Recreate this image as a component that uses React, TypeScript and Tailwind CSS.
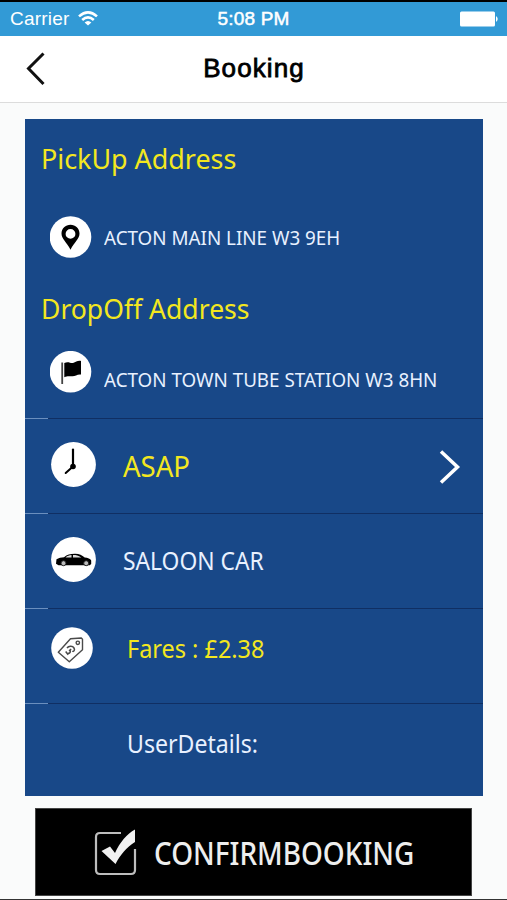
import React from 'react';

function StatusBar() {
  return (
    <div className="grid h-[36px] grid-cols-3 items-center border-t-2 border-black bg-[#329ad6] text-[19px] leading-none text-white">
      <div className="flex items-center gap-[9px] pb-[2px] pl-[10px]">
        <span className="tracking-[0.2px]">Carrier</span>
        <svg width="20" height="15" viewBox="0 0 20 15" fill="none" stroke="white" strokeWidth="2.6">
          <path d="M1 5.4 Q10 -2.6 19 5.4" />
          <path d="M4.2 8.9 Q10 3.8 15.8 8.9" />
          <path d="M10 14.6 L6.6 11.4 Q10 8.4 13.4 11.4 Z" fill="white" stroke="none" />
        </svg>
      </div>
      <span className="pb-[2px] text-center tracking-[0.2px] [-webkit-text-stroke:0.5px_white]">5:08 PM</span>
      <div className="flex justify-end pb-[1px] pr-[8px]">
        <svg width="40" height="16" viewBox="0 0 40 16" fill="white">
          <rect x="1" y="0.5" width="35" height="15" rx="1.5" />
          <path d="M37 5 Q40.5 8 37 11 Z" />
        </svg>
      </div>
    </div>
  );
}

function Header() {
  return (
    <div className="flex h-[67px] items-center justify-between border-b border-[#dcdcdc] bg-white">
      <button className="w-[100px] pl-[25px]">
        <svg width="20" height="34" viewBox="0 0 20 34" fill="none" stroke="#111" strokeWidth="3">
          <path d="M18.5 1.5 L3.5 16.5 L18.5 32" />
        </svg>
      </button>
      <h1 className="pb-[2px] pl-px text-[26px] leading-none tracking-[1.1px] text-black [-webkit-text-stroke:0.8px_black]">Booking</h1>
      <div className="w-[100px]" />
    </div>
  );
}

function PinIcon() {
  return (
    <svg className="shrink-0" width="42" height="42" viewBox="0 0 42 42">
      <circle cx="20.5" cy="21" r="20.8" fill="white" />
      <path fillRule="evenodd" d="M20.500 8.800c-5 0-9 3.900-9 8.800 0 5.600 5.200 8.600 9 16.200 3.800-7.600 9-10.600 9-16.200 0-4.900-4-8.800-9-8.800zm0 4.200a4.900 4.900 0 1 1 0 9.800 4.900 4.900 0 0 1 0-9.800z" />
    </svg>
  );
}

function FlagIcon() {
  return (
    <svg className="shrink-0" width="42" height="42" viewBox="0 0 42 42">
      <circle cx="20.5" cy="20.7" r="20.8" fill="white" />
      <path d="M12.2 11.500v21.500" stroke="#444" strokeWidth="1.8" />
      <path d="M14.300 12c4-2 6 .4 8.700-.1 3-.6 4.500-2.600 8-1.900v13.500c-4-.4-5.500 1.700-8.500 1.800-3 .1-5-.8-8.200 1z" />
    </svg>
  );
}

function ClockIcon() {
  return (
    <svg className="shrink-0" width="46" height="46" viewBox="0 0 46 46">
      <circle cx="22.5" cy="22.5" r="22.4" fill="white" />
      <path d="M22 7.500v17" stroke="black" strokeWidth="2.2" strokeLinecap="round" />
      <path d="M22 24.500l-7.300 6.500" stroke="black" strokeWidth="2" strokeLinecap="round" />
      <circle cx="22" cy="24.500" r="2.8" />
    </svg>
  );
}

function CarIcon() {
  return (
    <svg className="shrink-0" width="46" height="46" viewBox="0 0 46 46">
      <circle cx="22.5" cy="22.5" r="22.4" fill="white" />
      <path d="M5.500 22.200c2-1.400 5-1.600 7.500-2 3-2.400 6-3.400 11-3.400 4.500 0 7 1.400 9.700 3.800 3 .3 5.800 1.200 6.500 3v3.400l-1.500 1.200H7.500L5 26.800z" />
      <path d="M14.500 20.400c2-1.600 3.700-2.300 6-2.400v2.400zM22 18c3.600 0 5.200.4 8.300 2.600L22 20.400z" fill="#ddd" />
      <circle cx="12.5" cy="26.2" r="2.5" fill="#bbb" stroke="#222" />
      <circle cx="35.2" cy="26.2" r="2.5" fill="#bbb" stroke="#222" />
    </svg>
  );
}

function TagIcon() {
  return (
    <svg className="shrink-0" width="42" height="42" viewBox="0 0 42 42" fill="none" stroke="#4a4a4a" strokeWidth="1.4">
      <circle cx="21" cy="21" r="20.8" fill="white" stroke="none" />
      <path d="M7.300 25.200L19.500 11.800l10.800-.8 1.200 1.200v10.600L18.300 34.700z" strokeLinejoin="round" />
      <circle cx="26.800" cy="15.800" r="1.7" />
      {/* pound sign tilted along the tag */}
      <path d="M16 21c1.500-2 5.500-2.500 7 0 1.200 2-.2 4-1.700 3.200M14.700 24.500l2.500 3.400M16.500 26.500c2.500 0 3.500-1.500 2.500-3.500M18 23.800l2.200-1.600" strokeWidth="1.5" />
    </svg>
  );
}

// the separator starts light under the icon inset, then goes dark
function Separator() {
  return (
    <div className="flex h-px">
      <div className="w-[23px] bg-[#6b8fbe]" />
      <div className="flex-1 bg-[#102f63]" />
    </div>
  );
}

function BookingCard() {
  return (
    <div className="ml-[25px] mt-[16px] h-[677px] w-[458px] bg-[#184888] font-['Noto_Sans',sans-serif] whitespace-nowrap text-[#e8f1ff]">
      <div className="h-[299px] pt-[19px]">
        <h2 className="ml-[16px] h-[40px] origin-left scale-x-[0.96] text-[28px] leading-[40px] text-[#f3e71f]">PickUp Address</h2>
        <div className="mt-[38px] flex h-[42px] items-center gap-[12px] pl-[25px]">
          <PinIcon />
          <span className="origin-left scale-x-[0.917] text-[20.5px]">ACTON MAIN LINE W3 9EH</span>
        </div>
        <h2 className="ml-[16px] mt-[30px] h-[40px] origin-left scale-x-[0.948] text-[28px] leading-[40px] text-[#f3e71f]">DropOff Address</h2>
        <div className="mt-[23px] flex h-[42px] items-center gap-[12px] pl-[25px]">
          <FlagIcon />
          <span className="mt-[15px] origin-left scale-x-[0.917] text-[20.5px]">ACTON TOWN TUBE STATION W3 8HN</span>
        </div>
      </div>
      <Separator />
      <div className="flex h-[94px] items-center pb-[2px] pl-[26px] pr-[22px]">
        <ClockIcon />
        <span className="ml-[26px] mt-[2px] origin-left scale-x-[0.95] text-[29px] text-[#f3e71f]">ASAP</span>
        <svg className="ml-auto mt-[3px]" width="22" height="34" viewBox="0 0 22 34" fill="none" stroke="white" strokeWidth="3.5">
          <path d="M2 1.5L18.5 17 2 32.5" />
        </svg>
      </div>
      <Separator />
      <div className="flex h-[94px] items-center pb-[3px] pl-[26px]">
        <CarIcon />
        <span className="ml-[26px] mt-[3px] origin-left scale-x-[0.913] text-[25px]">SALOON CAR</span>
      </div>
      <Separator />
      <div className="flex h-[94px] items-center pb-[16px] pl-[26px]">
        <TagIcon />
        <span className="ml-[34px] mt-px origin-left scale-x-[0.938] text-[25px] text-[#f3e71f]">Fares : £2.38</span>
      </div>
      <Separator />
      <div className="flex h-[92px] items-center pb-[13px] pl-[102px]">
        <span className="origin-left scale-x-[0.925] text-[25px]">UserDetails:</span>
      </div>
    </div>
  );
}

function ConfirmButton() {
  return (
    <button className="ml-[35px] mt-[12px] flex h-[88px] w-[437px] items-center border border-[#444] bg-black pl-[58px] whitespace-nowrap">
      <svg className="shrink-0" width="43" height="48" viewBox="0 0 43 48">
        <path d="M27 5H6Q2 5 2 9v33q0 4 4 4h31q4 0 4-4V21" fill="none" stroke="#bdbdbd" strokeWidth="2.2" />
        <path d="M7.500 23l8.500-4.500 5 6.500C26 14 33 6 41 1.500V14C33 19 26 27 21.500 36z" fill="#f1f1f1" />
      </svg>
      <span className="ml-[17px] mt-[2px] origin-left scale-x-[0.873] font-['Noto_Sans',sans-serif] text-[32px] font-medium text-[#eee]">CONFIRMBOOKING</span>
    </button>
  );
}

export default function App() {
  return (
    <div className="flex h-[900px] w-[507px] flex-col overflow-hidden border-b border-[#333] bg-[#fafbfb] font-['Liberation_Sans',Arial,sans-serif]">
      <StatusBar />
      <Header />
      <BookingCard />
      <ConfirmButton />
    </div>
  );
}
